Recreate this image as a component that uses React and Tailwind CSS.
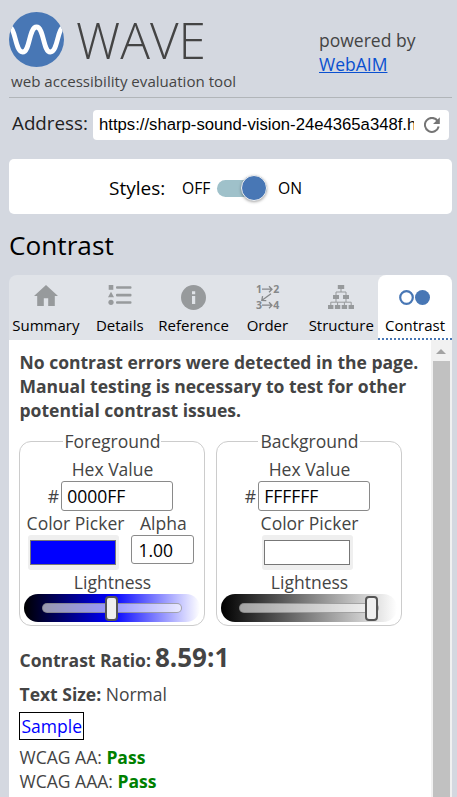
import React from "react";

function Logo() {
  return (
    <svg width="55" height="55" viewBox="0 0 55 55" className="shrink-0">
      <defs>
        <clipPath id="disc"><circle cx="27.5" cy="27.5" r="27.5" /></clipPath>
      </defs>
      <circle cx="27.5" cy="27.5" r="27.5" fill="#4877b5" />
      <path clipPath="url(#disc)" d="M1.5 15.5 C6.5 18 6.5 40 13.7 40 C21 40 20 15 27.5 15 C35 15 34 40 41.3 40 C48.5 40 48.5 18 53.5 15.5" fill="none" stroke="#fff" strokeWidth="4.8" />
    </svg>
  );
}

function HomeIcon() {
  return (
    <svg width="24" height="21" viewBox="0 0 24 21" fill="#979a9c">
      <path d="M12 0 L24 11 H20.8 V21 H14.2 V13.2 H9.8 V21 H3.2 V11 H0 Z" />
    </svg>
  );
}

function DetailsIcon() {
  return (
    <svg width="24" height="20" viewBox="0 0 24 20" fill="#979a9c">
      <rect x="0.7" y="0" width="4.6" height="4.8" />
      <path d="M3 6.8 L6 12.3 H0 Z" />
      <circle cx="3" cy="17.3" r="2.6" />
      <rect x="8" y="1.2" width="15.5" height="2.6" rx="1" />
      <rect x="8" y="8.8" width="15.5" height="2.6" rx="1" />
      <rect x="8" y="16.2" width="15.5" height="2.6" rx="1" />
    </svg>
  );
}

function InfoIcon() {
  return (
    <svg width="25" height="25" viewBox="0 0 25 25">
      <circle cx="12.5" cy="12.5" r="12.5" fill="#979a9c" />
      <path d="M11 6.3 h3.2 v3 h-3.2 z M11 11 h3.2 v8 h-3.2 z" fill="#e0e3e8" />
    </svg>
  );
}

function OrderIcon() {
  return (
    <svg width="25" height="26" viewBox="0 0 25 26" className="overflow-visible">
      <g fill="#85888a" fontFamily="Open Sans, sans-serif" fontWeight="700" fontSize="10.5">
        <text x="1" y="9">1</text>
        <text x="18.3" y="9">2</text>
        <text x="1" y="25">3</text>
        <text x="18.3" y="25">4</text>
      </g>
      <path d="M7 5.2 H17 M14 2.2 L17 5.2 L14 8.2 M16 9.8 L7 16.2 M7.6 12.2 L6.8 16.4 L11.3 16.6 M7 21.2 H17 M14 18.2 L17 21.2 L14 24.2" fill="none" stroke="#85888a" strokeWidth="1.3" />
    </svg>
  );
}

function StructureIcon() {
  return (
    <svg width="26" height="24" viewBox="0 0 26 24">
      <path d="M13 3 V7 M8 10.5 V7 H18 V10.5 M8 12 V17 M18 12 V17 M2.8 21 V17.2 H23.2 V21 M9.6 21 V17.2 M16.4 21 V17.2" fill="none" stroke="#979a9c" strokeWidth="1" />
      <g fill="#979a9c">
        <rect x="9.8" y="0" width="6.4" height="4" />
        <rect x="5" y="10" width="6" height="4" />
        <rect x="15" y="10" width="6" height="4" />
        <rect x="0" y="20" width="5.4" height="4" />
        <rect x="6.9" y="20" width="5.4" height="4" />
        <rect x="13.7" y="20" width="5.4" height="4" />
        <rect x="20.6" y="20" width="5.4" height="4" />
      </g>
    </svg>
  );
}

function ContrastIcon() {
  return (
    <svg width="31" height="15" viewBox="0 0 31 15" className="mr-px">
      <circle cx="7.5" cy="7.5" r="6.3" fill="none" stroke="#4877b5" strokeWidth="2.2" />
      <circle cx="23.5" cy="7.5" r="7.5" fill="#4877b5" />
    </svg>
  );
}

const tabs = [
  ["Summary", HomeIcon, "pt-[10px]"],
  ["Details", DetailsIcon, "pt-[10px]"],
  ["Reference", InfoIcon, "pt-[10px]"],
  ["Order", OrderIcon, "pt-[9px]"],
  ["Structure", StructureIcon, "pt-[10px]"],
  ["Contrast", ContrastIcon, "pt-[15px]"],
];

function Tab({ label, Icon, pad, active }) {
  return (
    <div className={"flex min-w-0 flex-1 flex-col items-center " + (active ? "rounded-t-[8px] border-b-2 border-dotted border-[#4877b5] bg-white" : "")}>
      <div className={"flex h-10 items-start " + pad}><Icon /></div>
      <div className="text-[15px] leading-[21px] whitespace-nowrap text-black">{label}</div>
    </div>
  );
}

function Lightness({ track, thumb }) {
  return (
    <div className={"flex h-7 w-[176px] items-center rounded-[14px] px-[18px] " + track}>
      <div className="flex h-[10px] w-[140px] items-center rounded-full border border-[#777]/60 bg-white/60">
        <div className={"h-[25px] w-[13px] shrink-0 rounded-[4px] border-2 border-[#555] bg-[#efefef] " + thumb} />
      </div>
    </div>
  );
}

function ColorBox({ title, hex, swatch, alpha, track, thumb }) {
  return (
    <fieldset className="flex h-[197px] w-[186px] flex-col items-center rounded-[12px] border border-[#ccc]">
      <legend className="mx-auto h-6 pr-px pl-[2px] leading-6">{title}</legend>
      <div className="-mt-[9px] flex w-full flex-col items-center">
        <div className="mt-[13px] h-6 pl-px leading-6">Hex Value</div>
        <div className="mr-[3px] flex h-[30px] items-center">
          <span className="mr-[2px]">#</span>
          <div className="h-[30px] w-[112px] rounded-[3px] border border-[#8a8a8a] px-[5px] leading-7 text-black">{hex}</div>
        </div>
        <div className={"flex w-full justify-center gap-[7px] " + (alpha ? "pr-[3px]" : "pl-px")}>
          <div className="flex flex-col items-center">
            <div className="h-6 leading-6">Color Picker</div>
            <div className="mr-[3px] h-[35px] w-[91px] rounded-[3px] bg-[#efefef] px-[2px] py-[5px]">
              <div className={"h-[25px] w-[86px] border border-[#777] " + swatch} />
            </div>
          </div>
          {alpha && (
            <div className="flex flex-col items-center">
              <div className="h-6 pl-px leading-6">Alpha</div>
              <div className="h-[29px] w-[63px] rounded-[3px] border border-[#8a8a8a] px-[6px] leading-[29px] text-black">{alpha}</div>
            </div>
          )}
        </div>
        <div className="h-6 pl-px leading-6">Lightness</div>
        <Lightness track={track} thumb={thumb} />
      </div>
    </fieldset>
  );
}

export default function App() {
  return (
    <div className="h-[797px] w-[457px] overflow-hidden bg-[#d4d8e0] pr-[5px] pl-[9px] font-['Open_Sans',sans-serif] text-[17.53px] text-[#444]">
      <header className="flex h-[98px] justify-between border-b border-[#b1b5b9] pt-3">
        <div>
          <div className="flex h-[55px] items-center">
            <Logo />
            <div className="ml-[12px] pt-[2px] text-[49.5px] leading-[55px] font-light">WAVE</div>
          </div>
          <div className="ml-[2px] text-[15.1px] leading-7 whitespace-nowrap">web accessibility evaluation tool</div>
        </div>
        <div className="w-[133px] pt-4 leading-6">
          powered by<br />
          <a className="text-[#0a50d0] underline">WebAIM</a>
        </div>
      </header>

      <div className="flex h-[42px] items-end">
        <label className="mb-[5px] ml-[3px] w-[81px] text-[18.8px] leading-6 whitespace-nowrap text-[#222]">Address:</label>
        <div className="flex h-[30px] w-[356px] items-center rounded-[4px] bg-white pr-[9px] pl-[6px]">
          <div className="w-[315px] overflow-hidden font-['Liberation_Sans',sans-serif] text-[16.7px] whitespace-nowrap text-black">https://sharp-sound-vision-24e4365a348f.h</div>
          <svg width="16" height="16" viewBox="0 0 16 16" className="ml-auto">
            <path d="M13.6 3.8 A7 7 0 1 0 14.7 9.6" fill="none" stroke="#757575" strokeWidth="2" />
            <path d="M15.8 0.3 V7 H9.1 Z" fill="#757575" />
          </svg>
        </div>
      </div>

      <div className="mt-[19px] flex h-[55px] items-center rounded-[5px] bg-white pt-[3px] pl-[100px] text-black">
        <span className="w-[73px] text-[19px]">Styles:</span>
        <span className="w-[35px] pt-[2px] text-[15.7px]">OFF</span>
        <div className="flex h-[17px] w-[50px] items-center justify-end rounded-full bg-[#9fc1ca]">
          <div className="h-[26px] w-[26px] shrink-0 rounded-full border border-[#f2f2f2] bg-[#4877b5] shadow-[0_1px_3px_rgba(0,0,0,0.35)]" />
        </div>
        <span className="ml-[11px] pt-[2px] text-[15.7px]">ON</span>
      </div>

      <h1 className="flex h-[61px] items-center pt-[2px] text-[26.2px] text-black">Contrast</h1>

      <nav className="flex h-[65px] rounded-t-[8px] bg-[#e0e3e8]">
        {tabs.map(([label, Icon, pad], i) => (
          <Tab key={label} label={label} Icon={Icon} pad={pad} active={i === 5} />
        ))}
      </nav>

      <div className="flex h-[457px] bg-white">
        <main className="w-[422px] pt-[10px] pl-[10px]">
          <p className="pl-[0.5px] leading-6 font-bold whitespace-nowrap">
            No contrast errors were detected in the page.<br />
            Manual testing is necessary to test for other<br />
            potential contrast issues.
          </p>
          <div className="mt-[7px] flex gap-[11px]">
            <ColorBox title="Foreground" hex="0000FF" swatch="bg-[#0000ff]" alpha="1.00" track="bg-[linear-gradient(90deg,#000,#00f_50%,#fff)]" thumb="ml-[62px]" />
            <ColorBox title="Background" hex="FFFFFF" swatch="bg-white" track="bg-[linear-gradient(90deg,#000,#808080_50%,#fff)]" thumb="ml-[125px]" />
          </div>
          <div className="mt-[15px] flex h-8 items-baseline pl-[0.5px] font-bold">
            Contrast Ratio:<span className="ml-1 text-[26px] leading-8">8.59:1</span>
          </div>
          <div className="mt-[9px] pl-[0.5px] leading-6"><b>Text Size:</b> Normal</div>
          <div className="mt-[6px] h-7 w-[65px] border border-black px-[1.5px] leading-[27px] text-[#0000ff]">Sample</div>
          <div className="mt-[5px] pl-[0.5px] leading-6">WCAG AA: <b className="text-[#008000]">Pass</b></div>
          <div className="pl-[0.5px] leading-6">WCAG AAA: <b className="text-[#008000]">Pass</b></div>
        </main>
        <div className="flex w-[21px] flex-col items-start bg-[#f1f1f1] pl-[2px]">
          <svg width="10" height="5" viewBox="0 0 10 5" className="mt-[9px] mb-[7px] ml-[3px] shrink-0"><path d="M5 0 L10 5 H0 Z" fill="#a3a3a3" /></svg>
          <div className="w-[17px] flex-1 bg-[#c1c1c1]" />
        </div>
      </div>
    </div>
  );
}
